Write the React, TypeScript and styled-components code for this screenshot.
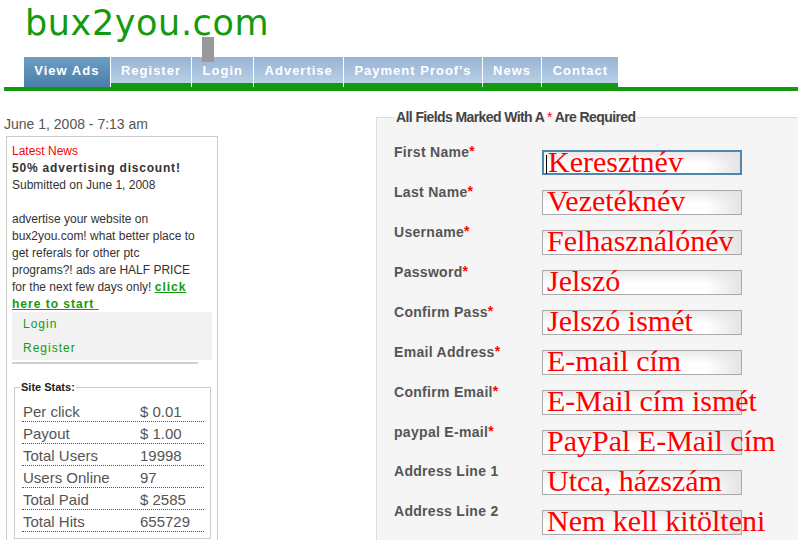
import React from 'react';
import styled, { createGlobalStyle } from 'styled-components';

const GREEN = '#149a0e';

const Global = createGlobalStyle`
  html, body { margin: 0; padding: 0; background: #fff; overflow: hidden; }
  body { font-family: "Liberation Sans", Arial, sans-serif; }
`;

const Header = styled.header`
  position: relative;
  height: 57px;
  padding-left: 25px;
`;

const Logo = styled.div`
  font-family: "DejaVu Sans", Verdana, sans-serif;
  font-size: 35px;
  line-height: 40px;
  padding-top: 3px;
  letter-spacing: 0.6px;
  color: ${GREEN};
`;

const Marker = styled.div`
  position: absolute;
  left: 202px;
  top: 37px;
  width: 12px;
  height: 25px;
  background: #9a9a9a;
  z-index: 2;
`;

const Nav = styled.nav`
  display: flex;
  height: 30px;
  margin-left: 4px;
  padding-left: 20px;
  border-bottom: 4px solid ${GREEN};
`;

const Tab = styled.a<{ $active?: boolean }>`
  display: flex;
  align-items: center;
  box-sizing: border-box;
  height: 30px;
  padding: 0 10.3px 4px;
  font-weight: bold;
  font-size: 13px;
  letter-spacing: 1px;
  color: #fff;
  text-decoration: none;
  background: ${(p) =>
    p.$active ? 'linear-gradient(#6e9ec4, #4a7ea8)' : 'linear-gradient(#97b3d3, #bed4ea)'};
  box-shadow: ${(p) => (p.$active ? 'none' : `inset 0 -4px 0 ${GREEN}`)};
  & + & {
    border-left: 1px solid #fff;
  }
`;

const Main = styled.div`
  display: flex;
  align-items: flex-start;
`;

const LeftCol = styled.aside`
  flex-shrink: 0;
  width: 218px;
  box-sizing: border-box;
  padding-left: 4px;
`;

const DateLine = styled.div`
  margin-top: 25px;
  font-size: 14px;
  line-height: 16px;
  color: #555;
`;

const NewsBox = styled.div`
  margin: 4px 0 0 2px;
  width: 212px;
  min-height: 420px;
  box-sizing: border-box;
  border: 1px solid #ccc;
  padding: 6px 5px 0;
  font-size: 12px;
  line-height: 17px;
  color: #333;
`;

const NewsTitle = styled.div`
  color: #f00;
`;

const Headline = styled.div`
  font-weight: bold;
  letter-spacing: 0.8px;
`;

const StartLink = styled.a`
  font-weight: bold;
  letter-spacing: 1px;
  color: ${GREEN};
  text-decoration: underline;
`;

const Menu = styled.div`
  margin-top: -1px;
  background: #f2f2f2;
`;

const MenuLink = styled.a`
  display: block;
  height: 24px;
  line-height: 25px;
  padding-left: 11px;
  font-size: 12px;
  letter-spacing: 1px;
  color: ${GREEN};
  text-decoration: none;
`;

const Divider = styled.div`
  width: 186px;
  height: 2px;
  margin-top: 2px;
  background: #cfcfcf;
`;

const StatsSet = styled.fieldset`
  margin: 17px 0 0 2px;
  width: 197px;
  box-sizing: border-box;
  border: 1px solid #ccc;
  padding: 6px 6px 6px 7px;
  min-width: 0;
`;

const StatsLegend = styled.legend`
  margin-left: -2px;
  padding: 0 1px;
  font-weight: bold;
  font-size: 11px;
  line-height: 13px;
  color: #222;
`;

const StatRow = styled.div`
  display: flex;
  height: 21px;
  line-height: 23px;
  border-bottom: 1px dotted #555;
  font-size: 15px;
  color: #555;
`;

const StatLabel = styled.span`
  width: 117px;
  padding-left: 1px;
`;

const FormSet = styled.fieldset`
  flex: 1;
  margin: 18px -40px 0 158px;
  padding: 19px 0 0 17px;
  border: 1px solid #ddd;
  background: #f5f5f5;
  min-width: 0;
  min-height: 460px;
`;

const FormLegend = styled.legend`
  padding: 0 2px;
  font-weight: bold;
  font-size: 14px;
  line-height: 16px;
  letter-spacing: -0.6px;
  color: #444;
`;

const Req = styled.span`
  color: #f00;
  font-weight: normal;
`;

const LabelReq = styled.span`
  color: #f00;
  vertical-align: 1px;
  letter-spacing: 0;
`;

const FormRow = styled.div`
  display: flex;
  height: 40px;
`;

const Label = styled.label`
  width: 148px;
  flex-shrink: 0;
  margin-top: -1px;
  font-weight: bold;
  font-size: 14px;
  line-height: 16px;
  letter-spacing: 0.3px;
  color: #555;
`;

const Field = styled.div<{ $focused?: boolean }>`
  margin-top: 6px;
  width: 200px;
  height: 25px;
  box-sizing: border-box;
  border: ${(p) => (p.$focused ? '2px solid #4f86ae' : '1px solid #a9a9a9')};
  padding-left: ${(p) => (p.$focused ? '2px' : '4px')};
  font-family: "Liberation Serif", "Times New Roman", serif;
  font-size: 30px;
  line-height: 20px;
  color: #f00;
  white-space: nowrap;
  overflow: visible;
  background: linear-gradient(to right, rgba(255, 255, 255, 0) 82%, #e4e4e4),
    linear-gradient(#e9e9e9, #fff 55%);
`;

const Caret = styled.span`
  display: inline-block;
  width: 1px;
  height: 19px;
  margin-right: 1px;
  background: #000;
  vertical-align: -2px;
`;

const stats: [string, string][] = [
  ['Per click', '$ 0.01'],
  ['Payout', '$ 1.00'],
  ['Total Users', '19998'],
  ['Users Online', '97'],
  ['Total Paid', '$ 2585'],
  ['Total Hits', '655729'],
];

const fields: { label: string; req: boolean; value: string }[] = [
  { label: 'First Name', req: true, value: 'Keresztnév' },
  { label: 'Last Name', req: true, value: 'Vezetéknév' },
  { label: 'Username', req: true, value: 'Felhasználónév' },
  { label: 'Password', req: true, value: 'Jelszó' },
  { label: 'Confirm Pass', req: true, value: 'Jelszó ismét' },
  { label: 'Email Address', req: true, value: 'E-mail cím' },
  { label: 'Confirm Email', req: true, value: 'E-Mail cím ismét' },
  { label: 'paypal E-mail', req: true, value: 'PayPal E-Mail cím' },
  { label: 'Address Line 1', req: false, value: 'Utca, házszám' },
  { label: 'Address Line 2', req: false, value: 'Nem kell kitölteni' },
];

const tabs = ['View Ads', 'Register', 'Login', 'Advertise', "Payment Proof's", 'News', 'Contact'];

export default function App() {
  return (
    <>
      <Global />
      <Header>
        <Logo>bux2you.com</Logo>
        <Marker />
      </Header>
      <Nav>
        {tabs.map((t, i) => (
          <Tab key={t} $active={i === 0} href="#">
            {t}
          </Tab>
        ))}
      </Nav>
      <Main>
        <LeftCol>
          <DateLine>June 1, 2008 - 7:13 am</DateLine>
          <NewsBox>
            <NewsTitle>Latest News</NewsTitle>
            <Headline>50% advertising discount!</Headline>
            <div>Submitted on June 1, 2008</div>
            <br />
            <div>
              advertise your website on
              <br />
              bux2you.com! what better place to
              <br />
              get referals for other ptc
              <br />
              programs?! ads are HALF PRICE
              <br />
              for the next few days only!{' '}
              <StartLink href="#">
                click
                <br />
                here to start{'\u00a0'}
              </StartLink>
            </div>
            <Menu>
              <MenuLink href="#">Login</MenuLink>
              <MenuLink href="#">Register</MenuLink>
            </Menu>
            <Divider />
            <StatsSet>
              <StatsLegend>Site Stats:</StatsLegend>
              {stats.map(([k, v]) => (
                <StatRow key={k}>
                  <StatLabel>{k}</StatLabel>
                  <span>{v}</span>
                </StatRow>
              ))}
            </StatsSet>
          </NewsBox>
        </LeftCol>
        <FormSet>
          <FormLegend>
            All Fields Marked With A <Req>*</Req> Are Required
          </FormLegend>
          {fields.map((f, i) => (
            <FormRow key={f.label}>
              <Label>
                {f.label}
                {f.req && <LabelReq>*</LabelReq>}
              </Label>
              <Field $focused={i === 0}>
                {i === 0 && <Caret />}
                {f.value}
              </Field>
            </FormRow>
          ))}
        </FormSet>
      </Main>
    </>
  );
}
